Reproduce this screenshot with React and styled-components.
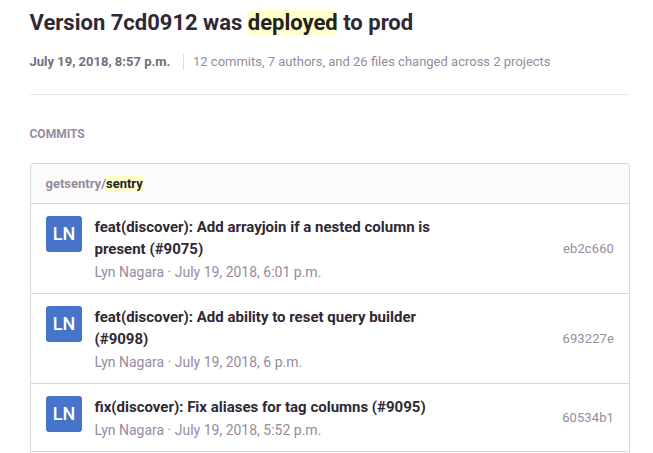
import React from "react";
import styled, { createGlobalStyle } from "styled-components";

const GlobalStyle = createGlobalStyle`
  * { box-sizing: border-box; }
  body { margin: 0; background: #fff; font-family: Roboto, sans-serif; color: #2f2936; overflow: hidden; }
`;

const Page = styled.main`
  width: 600px;
  margin-left: 30px;
  padding-top: 9px;
`;

const Title = styled.h1`
  margin: 0 0 0 -0.5px;
  font-size: 22px;
  line-height: 28px;
  font-weight: 700;
  white-space: nowrap;
`;

const Highlight = styled.mark`
  background: #ffffcc;
  color: #222;
`;

const Summary = styled.div`
  display: flex;
  align-items: center;
  height: 16px;
  margin: 17px 0 0 -0.5px;
  font-size: 13px;
  line-height: 16px;
  color: #968ba0;
  white-space: nowrap;
`;

const DeployDate = styled.time`
  width: 154px;
  margin-right: 9.5px;
  border-right: 1px solid #e2dee6;
  font-weight: 700;
  color: #766c80;
`;

const Divider = styled.hr`
  margin: 24px 0 0;
  border: 0;
  border-top: 1px solid #e9e8ea;
`;

const SectionTitle = styled.h2`
  margin: 31px 0 0 -0.5px;
  font-size: 12px;
  line-height: 16px;
  font-weight: 700;
  text-transform: uppercase;
  color: #968ba0;
`;

const Panel = styled.section`
  margin-top: 21px;
  padding-bottom: 8px;
  border: 1px solid #d9d6de;
  border-radius: 3px;
`;

const PanelHeader = styled.header`
  height: 40px;
  padding: 0 14.5px;
  display: flex;
  align-items: center;
  background: #fbfbfb;
  border-bottom: 1px solid #d9d6de;
  border-radius: 3px 3px 0 0;
  font-size: 13px;
  line-height: 15px;
  font-weight: 700;
  color: #968ba0;
`;

const CommitRow = styled.article`
  display: flex;
  align-items: center;
  padding: 12px 15px 10px;
  border-bottom: 1px solid #d9d6de;
`;

const Avatar = styled.div`
  width: 36px;
  height: 36px;
  align-self: flex-start;
  margin-right: 12.5px;
  padding-bottom: 1px;
  border-radius: 3px;
  background: #4674ca;
  color: #fff;
  display: flex;
  align-items: center;
  justify-content: center;
  font-size: 18px;
  font-weight: 500;
`;

const CommitText = styled.div`
  width: 350px;
`;

const CommitTitle = styled.h3`
  margin: 0;
  font-size: 15px;
  line-height: 22px;
  font-weight: 700;
`;

const Byline = styled.p`
  margin: 1px 0 0;
  font-size: 14px;
  line-height: 22px;
  color: #968ba0;
`;

const Hash = styled.span`
  margin-left: auto;
  padding-bottom: 2px;
  font-size: 13px;
  letter-spacing: 0.1px;
  color: #968ba0;
`;

const commits = [
  { title: "feat(discover): Add arrayjoin if a nested column is present (#9075)", time: "6:01 p.m.", hash: "eb2c660" },
  { title: "feat(discover): Add ability to reset query builder (#9098)", time: "6 p.m.", hash: "693227e" },
  { title: "fix(discover): Fix aliases for tag columns (#9095)", time: "5:52 p.m.", hash: "60534b1" },
];

export default function App() {
  return (
    <Page>
      <GlobalStyle />
      <Title>Version 7cd0912 was <Highlight>deployed</Highlight> to prod</Title>
      <Summary>
        <DeployDate>July 19, 2018, 8:57 p.m.</DeployDate>
        <span>12 commits, 7 authors, and 26 files changed across 2 projects</span>
      </Summary>
      <Divider />
      <SectionTitle>Commits</SectionTitle>
      <Panel>
        <PanelHeader>getsentry/<Highlight>sentry</Highlight></PanelHeader>
        {commits.map((c) => (
          <CommitRow key={c.hash}>
            <Avatar>LN</Avatar>
            <CommitText>
              <CommitTitle>{c.title}</CommitTitle>
              <Byline>Lyn Nagara · July 19, 2018, {c.time}</Byline>
            </CommitText>
            <Hash>{c.hash}</Hash>
          </CommitRow>
        ))}
      </Panel>
    </Page>
  );
}
